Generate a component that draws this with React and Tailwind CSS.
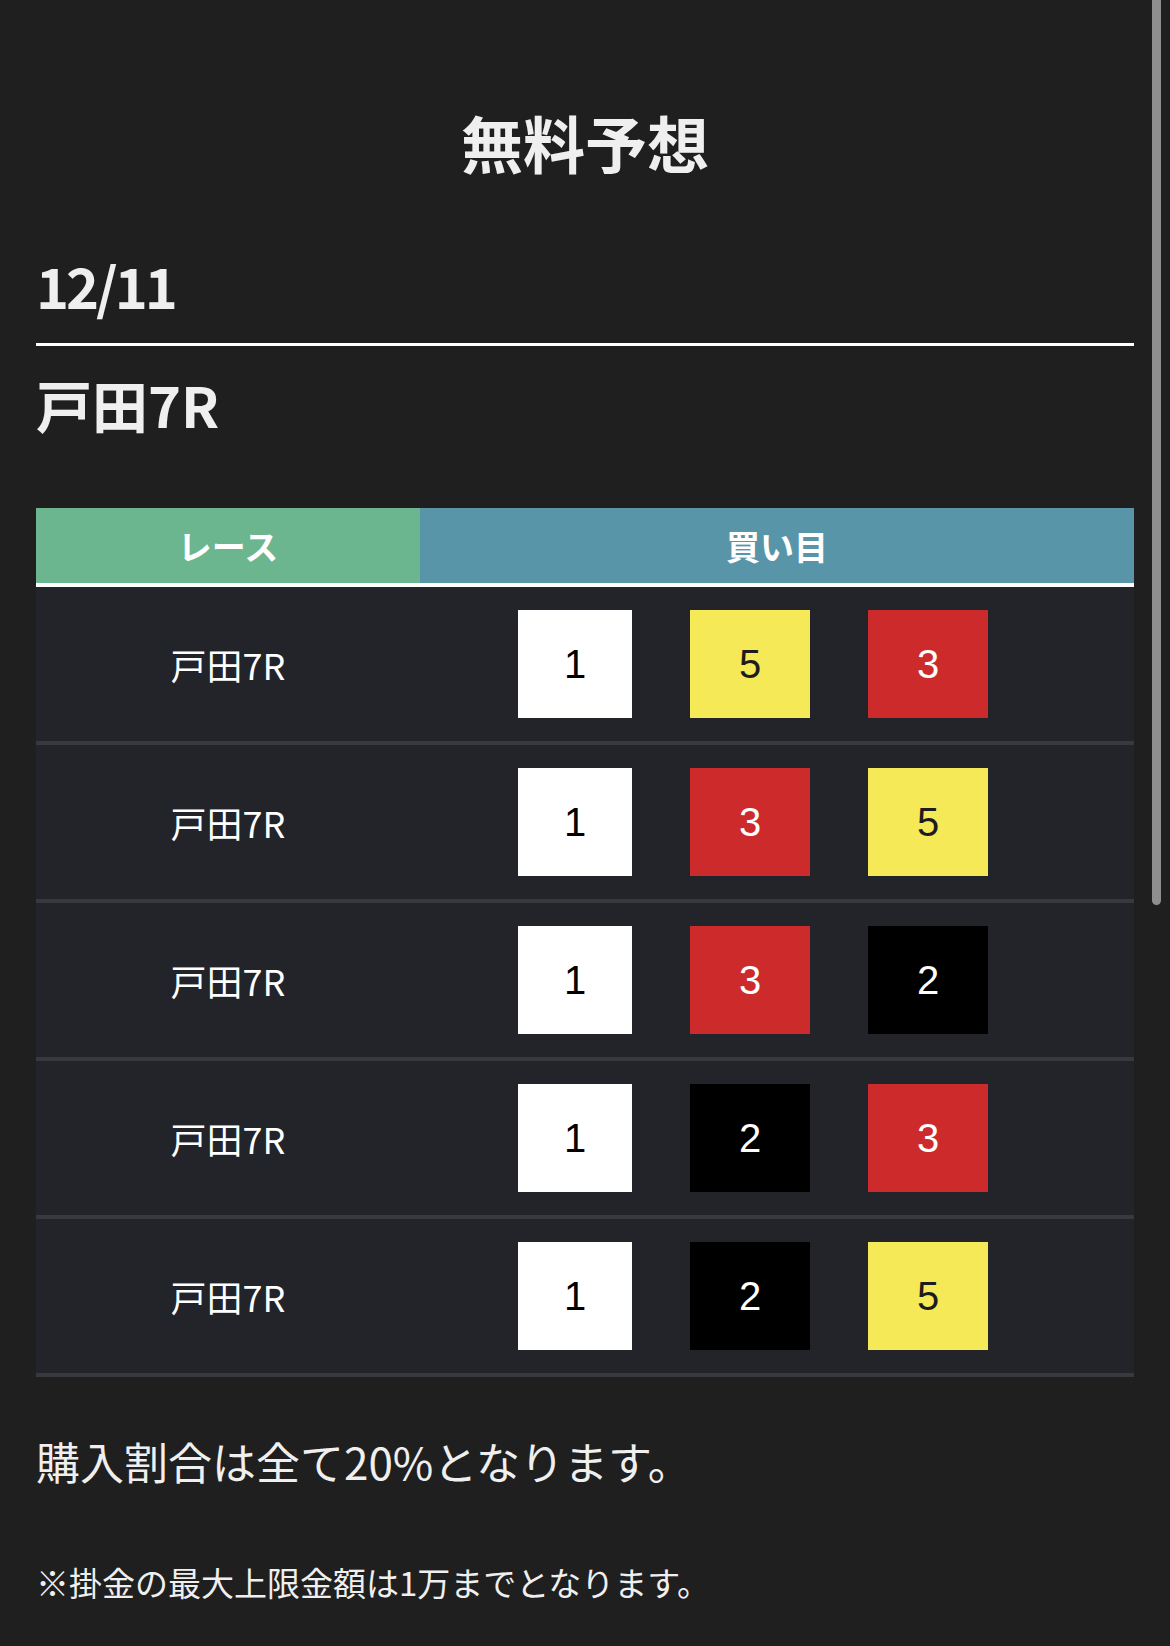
export default function App() {
  const rows = [
    [1, 5, 3],
    [1, 3, 5],
    [1, 3, 2],
    [1, 2, 3],
    [1, 2, 5],
  ];
  const colors = {
    1: "bg-white text-black",
    2: "bg-black text-white",
    3: "bg-[#cd2a2b] text-white",
    5: "bg-[#f5e958] text-[#1c1c1c]",
  };
  const widths = ["w-[114px]", "w-[120px]", "w-[120px]"];

  return (
    <div className="relative min-h-[1646px] bg-[#1f1f1f] text-[#efefef] px-9 pt-[111px] pb-[48px] font-['Noto_Sans_CJK_JP','Noto_Sans',sans-serif]">
      <h1 className="text-center text-[62px] leading-[62px] font-bold">無料予想</h1>

      <div className="mt-[84px] text-[56px] leading-[56px] font-bold tracking-[-3px] pb-[30px] border-b-[3px] border-white">
        12/11
      </div>
      <div className="mt-[30px] text-[56px] leading-[56px] font-bold">戸田7R</div>

      <div className="mt-[76px]">
        <div className="flex h-[79px] border-b-4 border-white">
          <div className="w-[384px] bg-[#6bb58f] flex items-center justify-center text-[34px] font-bold text-white">
            レース
          </div>
          <div className="flex-1 bg-[#5995a8] flex items-center justify-center text-[34px] font-bold text-white">
            買い目
          </div>
        </div>
        {rows.map((r, i) => (
          <div key={i} className="flex h-[158px] bg-[#222429] border-b-4 border-[#363a3f]">
            <div className="w-[384px] flex items-center justify-center text-[36px] text-white">
              戸田7R
            </div>
            <div className="flex-1 flex items-center pl-[98px] gap-[58px]">
              {r.map((n, j) => (
                <div
                  key={j}
                  className={`${widths[j]} h-[108px] flex items-center justify-center text-[40px] font-['Liberation_Sans',sans-serif] ${colors[n]}`}
                >
                  {n}
                </div>
              ))}
            </div>
          </div>
        ))}
      </div>

      <p className="mt-[62px] text-[44px] leading-[44px]">購入割合は全て20%となります。</p>
      <p className="mt-[83px] text-[33px] leading-[33px]">※掛金の最大上限金額は1万までとなります。</p>

      <div className="absolute right-[9px] top-0 w-[9px] h-[905px] bg-[#8e8e8e] rounded-b-full" />
    </div>
  );
}
